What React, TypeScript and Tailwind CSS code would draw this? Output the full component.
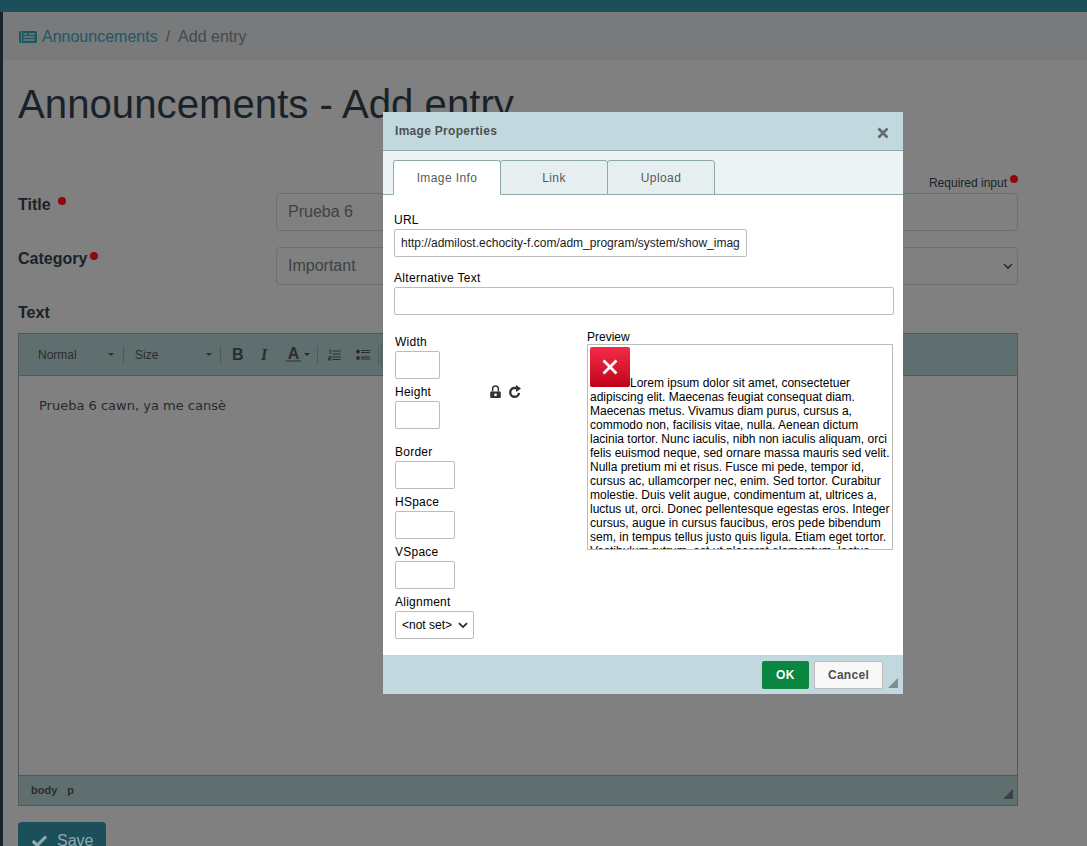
import React from "react";

const LOREM =
  "Lorem ipsum dolor sit amet, consectetuer adipiscing elit. Maecenas feugiat consequat diam. Maecenas metus. Vivamus diam purus, cursus a, commodo non, facilisis vitae, nulla. Aenean dictum lacinia tortor. Nunc iaculis, nibh non iaculis aliquam, orci felis euismod neque, sed ornare massa mauris sed velit. Nulla pretium mi et risus. Fusce mi pede, tempor id, cursus ac, ullamcorper nec, enim. Sed tortor. Curabitur molestie. Duis velit augue, condimentum at, ultrices a, luctus ut, orci. Donec pellentesque egestas eros. Integer cursus, augue in cursus faucibus, eros pede bibendum sem, in tempus tellus justo quis ligula. Etiam eget tortor. Vestibulum rutrum, est ut placerat elementum, lectus nisl aliquam velit, tempor aliquam eros nunc nonummy metus.";

function Dot() {
  return <span className="inline-block w-2 h-2 rounded-full bg-[#8b0a0e]" />;
}

function Caret() {
  return <span className="w-0 h-0 border-x-[3px] border-x-transparent border-t-[3px] border-t-[#2c2c2c]" />;
}

function Sep() {
  return <span className="w-px h-[18px] bg-[#4c5a5a]" />;
}

function Field({ label, width = "w-[45px]", mt = "" }: { label: string; width?: string; mt?: string }) {
  return (
    <div className={mt}>
      <div className="h-[17px] leading-[17px] text-[12px] tracking-[0.25px]">{label}</div>
      <div className={`${width} h-[28px] border border-[#bcbcbc] rounded-[2px] bg-white`} />
    </div>
  );
}

function Tab({ label, active, w }: { label: string; active?: boolean; w: string }) {
  return (
    <div
      className={`${w} h-[35px] -mr-px border border-[#8fa8aa] rounded-t-[3px] flex items-center justify-center text-[12px] tracking-[0.4px] text-[#595959] ${
        active ? "bg-white border-b-white relative z-10" : "bg-[#e6eef0]"
      }`}
    >
      {label}
    </div>
  );
}

function Dialog() {
  return (
    <div className="absolute left-[383px] top-[112px] w-[520px] h-[582px] bg-white flex flex-col text-black font-['Liberation_Sans',sans-serif]">
      <div className="h-[39px] shrink-0 bg-[#c1d9de] border-b border-[#8fa8aa] pl-[12px] pr-[14px] flex items-center justify-between">
        <span className="text-[12px] font-bold tracking-[0.3px] text-[#4f4f4f]">Image Properties</span>
        <svg width="12" height="12" viewBox="0 0 12 12" className="mt-[3px]">
          <path d="M1.5 1.5 L10.5 10.5 M10.5 1.5 L1.5 10.5" stroke="#5f6b6d" strokeWidth="2.6" />
        </svg>
      </div>
      <div className="h-[44px] shrink-0 bg-[#ebf3f5] border-b border-[#8fa8aa] pl-[10px] pt-[9px] flex items-start">
        <Tab label="Image Info" active w="w-[108px]" />
        <Tab label="Link" w="w-[108px]" />
        <Tab label="Upload" w="w-[108px]" />
      </div>
      <div className="flex-1 min-h-0 px-[11px] pt-[17px] text-[12px]">
        <div className="h-[17px] leading-[17px] tracking-[0.25px]">URL</div>
        <div className="w-[353px] h-[28px] border border-[#bcbcbc] rounded-[2px] pl-[6px] flex items-center overflow-hidden whitespace-nowrap text-[12px] text-[#1a1a1a]">
          http://admilost.echocity-f.com/adm_program/system/show_imag
        </div>
        <div className="h-[17px] leading-[17px] mt-[13px] tracking-[0.3px]">Alternative Text</div>
        <div className="w-[500px] h-[28px] border border-[#bcbcbc] rounded-[2px]" />
        <div className="flex mt-[13px]">
          <div className="w-[193px] pl-[1px] pt-[6px] shrink-0">
            <div className="flex items-start">
              <div className="w-[94px]">
                <Field label="Width" />
                <Field label="Height" mt="mt-[5px]" />
              </div>
              <div className="flex items-center gap-[6px] mt-[51px]">
                <svg width="13" height="14" viewBox="0 0 13 14">
                  <path d="M2 6.5h9a.8.8 0 0 1 .8.8v5a.8.8 0 0 1-.8.8H2a.8.8 0 0 1-.8-.8v-5a.8.8 0 0 1 .8-.8z" fill="#333" />
                  <path d="M3.6 6.5V4a2.9 2.9 0 0 1 5.8 0v2.5" fill="none" stroke="#333" strokeWidth="1.5" />
                  <circle cx="6.5" cy="9.8" r="1.4" fill="#fff" />
                </svg>
                <svg width="14" height="14" viewBox="0 0 14 14">
                  <path d="M11 7.8A4.4 4.4 0 1 1 7 3h2" fill="none" stroke="#333" strokeWidth="2.4" />
                  <path d="M8 0 L13 3.4 L8 7z" fill="#333" />
                </svg>
              </div>
            </div>
            <Field label="Border" width="w-[60px]" mt="mt-[15px]" />
            <Field label="HSpace" width="w-[60px]" mt="mt-[5px]" />
            <Field label="VSpace" width="w-[60px]" mt="mt-[5px]" />
            <div className="mt-[5px]">
              <div className="h-[17px] leading-[17px] tracking-[0.25px]">Alignment</div>
              <div className="w-[79px] h-[28px] border border-[#bcbcbc] rounded-[2px] pl-[6px] pr-[5px] flex items-center justify-between text-[12px]">
                <span>&lt;not set&gt;</span>
                <svg width="10" height="7" viewBox="0 0 10 7">
                  <path d="M1 1.2 L5 5 L9 1.2" fill="none" stroke="#222" strokeWidth="1.7" />
                </svg>
              </div>
            </div>
          </div>
          <div className="w-[306px] shrink-0 mt-[1px]">
            <div className="h-[15px] leading-[17px]">Preview</div>
            <div className="h-[206px] border border-[#bcbcbc] pl-[2px] pr-[2px] pt-[2px] overflow-hidden text-[12px] leading-[14px] text-black">
              <span className="inline-block align-baseline w-[40px] h-[40px] rounded-[2px] bg-gradient-to-b from-[#f32a48] to-[#bf0018] relative">
                <svg width="16" height="16" viewBox="0 0 16 16" className="absolute left-[12px] top-[12px]">
                  <path d="M1.5 1.5 L14.5 14.5 M14.5 1.5 L1.5 14.5" stroke="#fff" strokeWidth="2.8" />
                </svg>
              </span>
              {LOREM}
            </div>
          </div>
        </div>
      </div>
      <div className="h-[39px] shrink-0 bg-[#c1d9de] flex items-center justify-end pr-[20px] gap-[5px] relative">
        <div className="w-[47px] h-[28px] rounded-[2px] bg-[#09863f] text-white text-[12px] font-bold tracking-[0.5px] flex items-center justify-center">
          OK
        </div>
        <div className="w-[69px] h-[28px] rounded-[2px] border border-[#bcbcbc] bg-[#f8f8f8] text-[#4f4f4f] text-[12px] font-bold tracking-[0.3px] flex items-center justify-center">
          Cancel
        </div>
        <svg width="10" height="10" viewBox="0 0 10 10" className="absolute right-[5px] bottom-[6px]">
          <path d="M10 0 V10 H0 Z" fill="#7f8e90" />
        </svg>
      </div>
    </div>
  );
}

export default function App() {
  return (
    <div className="relative w-[1087px] h-[846px] overflow-hidden bg-[#808080] font-['Liberation_Sans',sans-serif]">
      <div className="h-[12px] bg-[#1b505a]" />
      <div className="flex h-[834px]">
        <div className="w-[3px] shrink-0 bg-[#18222b]" />
        <div className="flex-1 min-w-0">
          <div className="h-[48px] bg-[#787a7b] pl-[16px] pt-[2px] flex items-center text-[16px] text-[#45494c]">
            <svg width="18" height="14" viewBox="0 0 18 14" className="mr-[5px]">
              <rect x="0" y="1" width="18" height="12" rx="1.5" fill="#1c5862" />
              <path d="M2.5 1.5V12.5" stroke="#787a7b" strokeWidth="0.8" />
              <path d="M4.5 4h4M10 4h5.5M4.5 7h11M4.5 10h11" stroke="#787a7b" strokeWidth="1.3" />
            </svg>
            <span className="text-[#1c5862]">Announcements</span>
            <span className="mx-[8px]">/</span>
            <span>Add entry</span>
          </div>
          <div className="pl-[15px] w-[1015px]">
            <h1 className="text-[40.2px] leading-[48px] mt-[21px] text-[#1a2229]">Announcements - Add entry</h1>
            <div className="flex justify-end items-start h-[16px] mt-[44px] text-[12px] leading-[16px] text-[#1a2229] gap-[3px]">
              <span className="mt-[2px]">Required input</span>
              <span className="mt-[2px] flex"><Dot /></span>
            </div>
            <div className="flex mt-[4px] h-[38px]">
              <div className="w-[258px] text-[16px] font-bold text-[#1a2229] leading-[24px] flex items-start">
                <span>Title</span>
                <span className="ml-[7px] mt-[4px] flex"><Dot /></span>
              </div>
              <div className="flex-1 border border-[#6e6e6e] rounded-[4px] pl-[11px] flex items-center text-[16px] text-[#3e4245]">
                Prueba 6
              </div>
            </div>
            <div className="flex mt-[16px] h-[38px]">
              <div className="w-[258px] text-[16px] font-bold text-[#1a2229] leading-[24px] flex items-start">
                <span>Category</span>
                <span className="ml-[3px] mt-[5px] flex"><Dot /></span>
              </div>
              <div className="flex-1 border border-[#6e6e6e] rounded-[4px] pl-[11px] pr-[4px] flex items-center justify-between text-[16px] text-[#3e4245]">
                Important
                <svg width="10" height="7" viewBox="0 0 10 7">
                  <path d="M1 1 L5 5 L9 1" fill="none" stroke="#2a2e31" strokeWidth="1.6" />
                </svg>
              </div>
            </div>
            <div className="mt-[16px] h-[24px] text-[16px] font-bold leading-[24px] text-[#1a2229]">Text</div>
            <div className="mt-[8px] h-[473px] border border-[#4c5a5a] flex flex-col">
              <div className="h-[42px] shrink-0 bg-[#5f6f6f] border-b border-[#4c5a5a] flex items-center text-[12px] text-[#2c2c2c]">
                <div className="w-[104px] pl-[19px] pr-[9px] flex items-center justify-between"><span>Normal</span><Caret /></div>
                <Sep />
                <div className="w-[96px] pl-[11px] pr-[8px] flex items-center justify-between"><span>Size</span><Caret /></div>
                <Sep />
                <span className="ml-[11px] w-[12px] text-[16px] font-bold leading-none">B</span>
                <span className="ml-[17px] w-[12px] text-[16px] font-bold italic leading-none font-['Liberation_Serif',serif]">I</span>
                <span className="ml-[13px] flex flex-col items-center w-[15px]">
                  <span className="text-[16px] font-bold leading-[13px]">A</span>
                  <span className="w-[15px] h-[2px] bg-[#4c4c4c]" />
                </span>
                <span className="ml-[3px] mr-[7px] flex"><Caret /></span>
                <Sep />
                <svg width="13" height="12" viewBox="0 0 13 12" className="ml-[10px]">
                  <path d="M1 1h1.2v4M4.5 2h8M4.5 5h8M4.5 8h8M4.5 10.5h8M.5 7.5h2.5v1.8H.5v1.7h2.7" fill="none" stroke="#2c2c2c" strokeWidth="1" />
                </svg>
                <svg width="14" height="12" viewBox="0 0 14 12" className="ml-[15px]">
                  <circle cx="2" cy="2.5" r="1.9" fill="#2c2c2c" />
                  <circle cx="2" cy="9" r="1.9" fill="#2c2c2c" />
                  <path d="M5 1.5h9M5 3.5h9M5 8h9M5 10h9" stroke="#2c2c2c" strokeWidth="1" />
                </svg>
                <span className="ml-[8px] flex"><Sep /></span>
                <span className="ml-[2px] w-[8px] h-[24px] border border-[#4c5a5a] rounded-[2px]" />
              </div>
              <div className="flex-1 pl-[20px] pt-[21px] text-[13px] leading-[18px] text-[#2a2a2a] font-['DejaVu_Sans',sans-serif]">
                Prueba 6 cawn, ya me cansè
              </div>
              <div className="h-[30px] shrink-0 bg-[#5f6f6f] border-t border-[#4c5a5a] pl-[12px] flex items-center gap-[10px] text-[11px] font-bold text-[#2c2c2c] relative">
                <span>body</span>
                <span>p</span>
                <svg width="10" height="10" viewBox="0 0 10 10" className="absolute right-[4px] bottom-[6px]">
                  <path d="M10 0 V10 H0 Z" fill="#3a4243" />
                </svg>
              </div>
            </div>
            <div className="mt-[16px] w-[88px] h-[40px] rounded-[4px] bg-[#1b505a] flex items-start pt-[7px] pl-[13px] gap-[9px] text-[16px] text-[#92a8ac]">
              <svg width="17" height="14" viewBox="0 0 17 14" className="mt-[5px]">
                <path d="M1.8 7 L6.2 11.4 L15 2.5" fill="none" stroke="#92a8ac" strokeWidth="3.2" />
              </svg>
              <span>Save</span>
            </div>
          </div>
        </div>
      </div>
      <Dialog />
    </div>
  );
}
